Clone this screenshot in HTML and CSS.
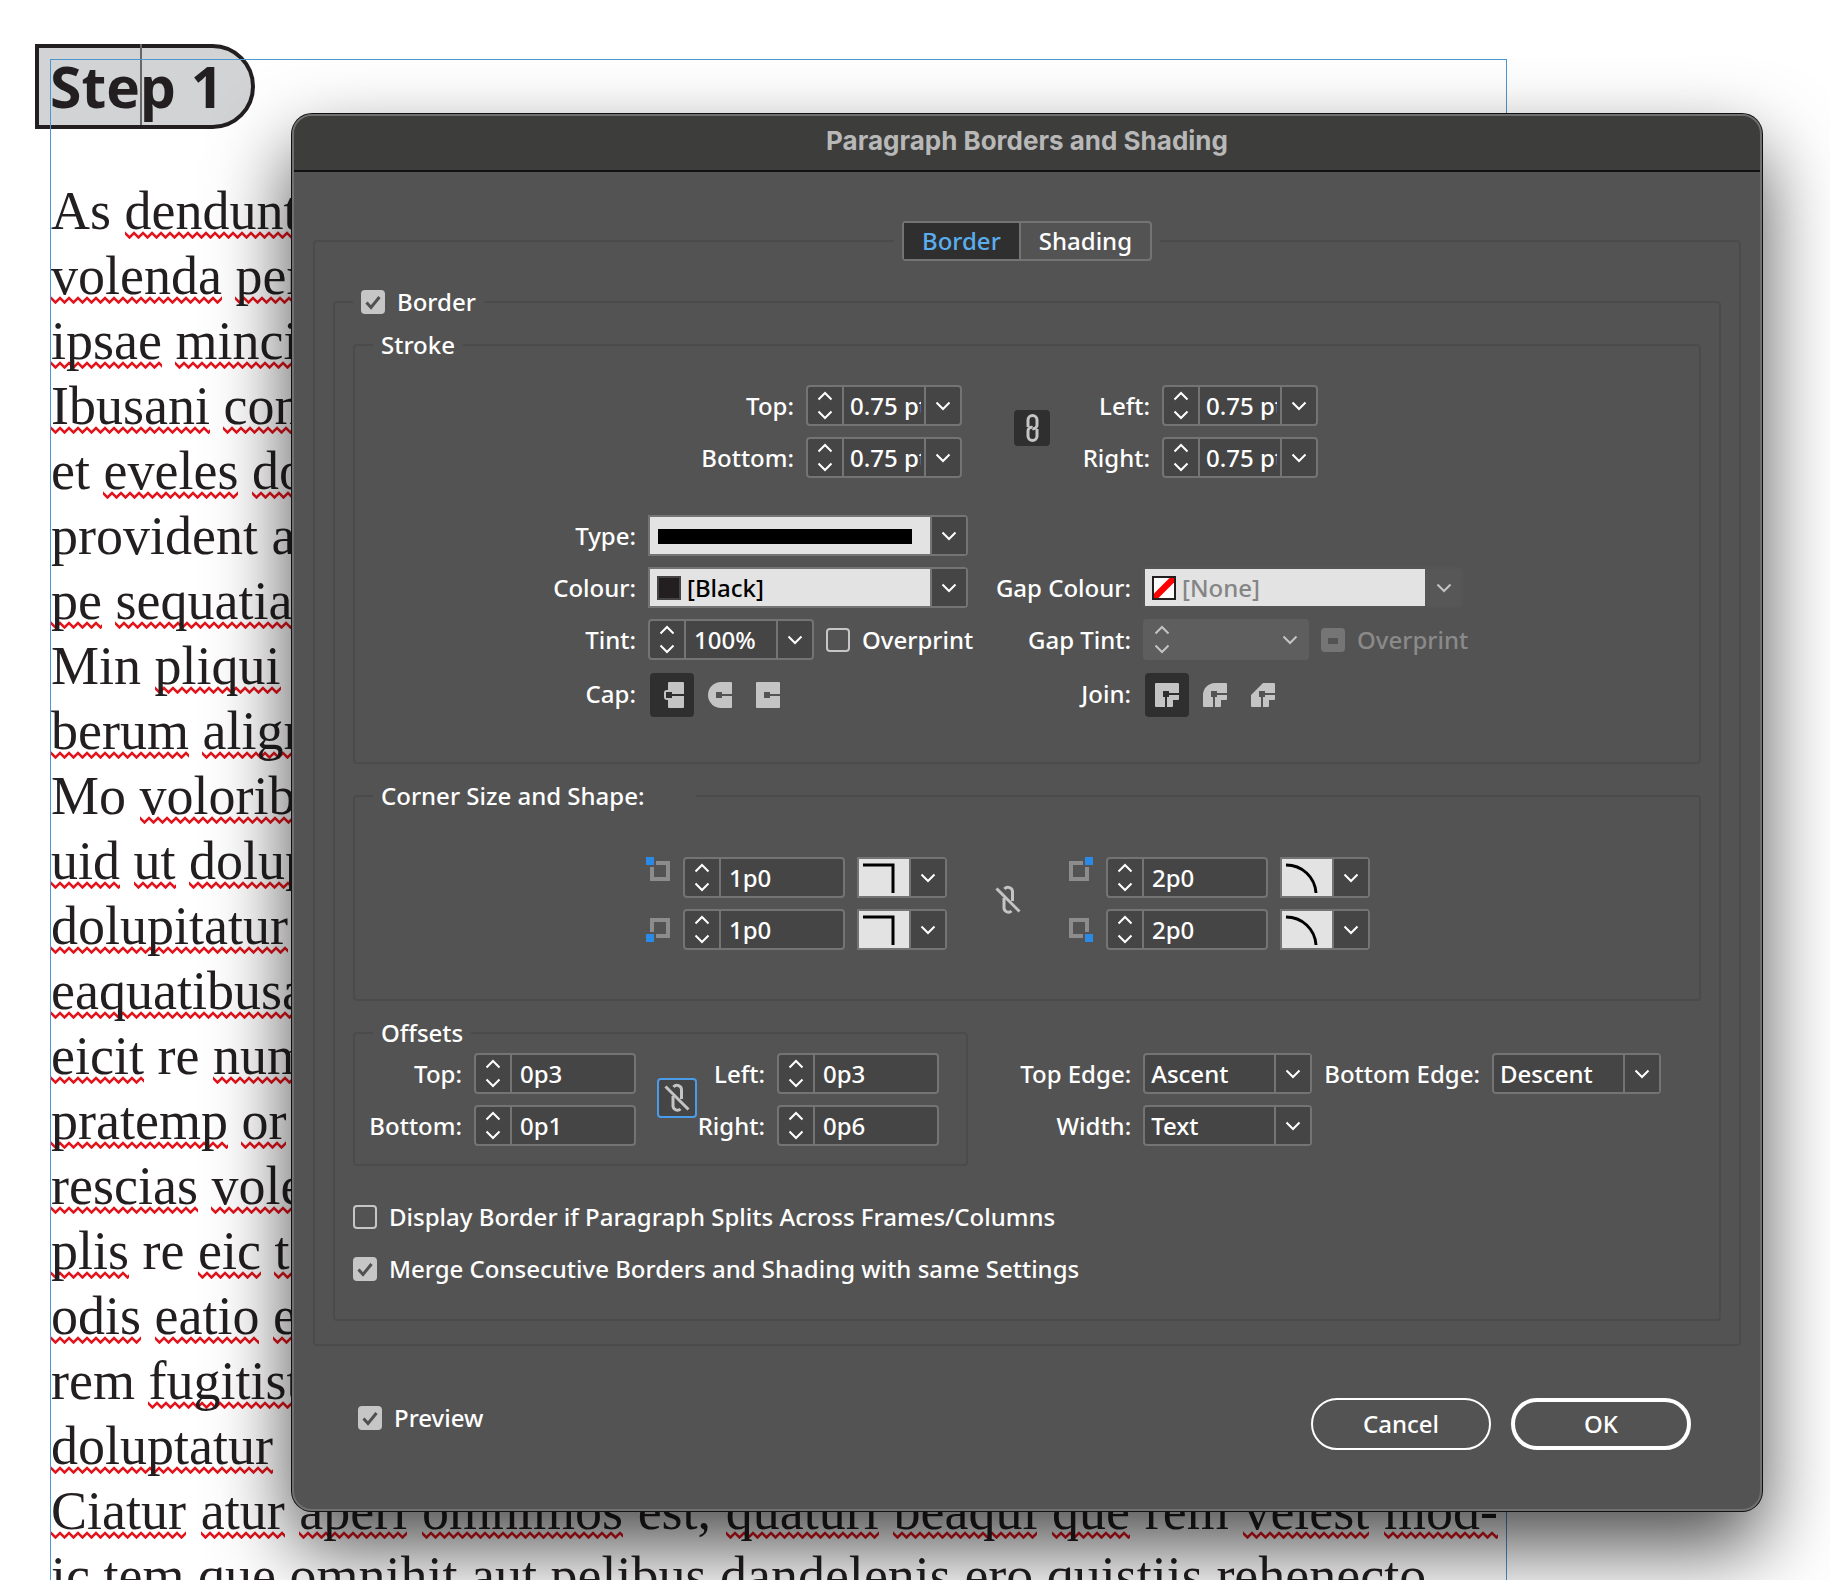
FILE: index.html
```
<!DOCTYPE html>
<html lang="en">
<head>
  <meta charset="utf-8">
  <title>Paragraph Borders and Shading</title>
  <link rel="stylesheet" href="styles.css">
</head>

<body>
  <!-- shared icons -->
  <svg class="sprite" aria-hidden="true">
    <symbol id="down" viewBox="0 0 16 10"><path d="M1.5 1.5L8 8l6.5-6.5" /></symbol>
    <symbol id="up" viewBox="0 0 16 10"><path d="M1.5 8.5L8 2l6.5 6.5" /></symbol>
    <symbol id="link" viewBox="0 0 24 30">
      <path d="M8 14V7a4.500 4.500 0 0 1 9 0v5a3.500 3.500 0 0 1-4.500 3.500" />
      <path d="M17 16v7a4.500 4.500 0 0 1-9 0v-5a3.500 3.500 0 0 1 4.500-3.500" />
    </symbol>
    <symbol id="unlink" viewBox="0 0 26 30">
      <path d="M9.500 4a4.500 4.500 0 0 1 8 3V16" />
      <path d="M9 13V23a4.500 4.500 0 0 0 7.500 3" />
      <path d="M1.500 3.500l23 23" />
    </symbol>
    <symbol id="square" viewBox="0 0 40 37"><path d="M4 6H34V34" /></symbol>
    <symbol id="round" viewBox="0 0 40 37"><path d="M4 6C20 6 33 18 34 34" /></symbol>
  </svg>

  <div class="page">
    <h1 class="step">Ste<span class="caret"></span>p 1</h1>
    <div class="story">
      <p>As <u>dendunt</u></p>
      <p><u>volenda</u> <u>per</u></p>
      <p><u>ipsae</u> <u>minci</u></p>
      <p><u>Ibusani</u> <u>con</u></p>
      <p>et <u>eveles</u> <u>dol</u></p>
      <p>provident a</p>
      <p><u>pe</u> <u>sequatia</u></p>
      <p>Min <u>pliqui</u></p>
      <p><u>berum</u> <u>align</u></p>
      <p>Mo <u>volorib</u></p>
      <p><u>uid</u> <u>ut</u> <u>dolup</u></p>
      <p><u>dolupitatur</u></p>
      <p><u>eaquatibusa</u></p>
      <p><u>eicit</u> re <u>num</u></p>
      <p><u>pratemp</u> <u>or</u></p>
      <p><u>rescias</u> <u>vole</u></p>
      <p><u>plis</u> re <u>eic</u> <u>to</u></p>
      <p><u>odis</u> <u>eatio</u> <u>e</u></p>
      <p>rem <u>fugitist</u></p>
      <p><u>doluptatur</u></p>
      <p class="full"><u>Ciatur</u> <u>atur</u> <u>aperi</u> <u>omnimos</u> est, <u>quaturi</u> <u>beaqui</u> <u>que</u> rem <u>velest</u> <u>mod-</u></p>
      <p><u>ic</u> tem <u>que</u> <u>omnihit</u> aut <u>pelibus</u> <u>dandelenis</u> ero <u>quistiis</u> <u>rehenecto</u></p>
    </div>
  </div>

  <form class="dialog" role="dialog" aria-labelledby="dialog-title">
    <h2 id="dialog-title" class="title">Paragraph Borders and Shading</h2>

    <fieldset class="group panel">
      <legend class="tabs">
        <span class="tab-bar">
          <button type="button" class="tab active">Border</button><button type="button" class="tab">Shading</button>
        </span>
      </legend>

      <fieldset class="group border-group">
        <legend><label class="check"><input type="checkbox" checked>Border</label></legend>

        <fieldset class="group stroke">
          <legend>Stroke</legend>

          <div class="weights">
            <label for="w-top">Top:</label>
            <div class="field">
              <span class="arrows"><button type="button" aria-label="Up"><svg><use href="#up" /></svg></button><button type="button" aria-label="Down"><svg><use href="#down" /></svg></button></span>
              <input id="w-top" type="text" value="0.75 pt">
              <button type="button" class="drop" aria-label="Open"><svg><use href="#down" /></svg></button>
            </div>
            <button type="button" class="link on" aria-label="Link"><svg><use href="#link" /></svg></button>
            <label for="w-left">Left:</label>
            <div class="field">
              <span class="arrows"><button type="button" aria-label="Up"><svg><use href="#up" /></svg></button><button type="button" aria-label="Down"><svg><use href="#down" /></svg></button></span>
              <input id="w-left" type="text" value="0.75 pt">
              <button type="button" class="drop" aria-label="Open"><svg><use href="#down" /></svg></button>
            </div>

            <label for="w-bottom">Bottom:</label>
            <div class="field">
              <span class="arrows"><button type="button" aria-label="Up"><svg><use href="#up" /></svg></button><button type="button" aria-label="Down"><svg><use href="#down" /></svg></button></span>
              <input id="w-bottom" type="text" value="0.75 pt">
              <button type="button" class="drop" aria-label="Open"><svg><use href="#down" /></svg></button>
            </div>
            <label for="w-right">Right:</label>
            <div class="field">
              <span class="arrows"><button type="button" aria-label="Up"><svg><use href="#up" /></svg></button><button type="button" aria-label="Down"><svg><use href="#down" /></svg></button></span>
              <input id="w-right" type="text" value="0.75 pt">
              <button type="button" class="drop" aria-label="Open"><svg><use href="#down" /></svg></button>
            </div>
          </div>

          <div class="style">
            <label for="type">Type:</label>
            <div class="field light">
              <select id="type"><option></option></select>
              <span class="line-sample"></span>
              <span class="drop"><svg><use href="#down" /></svg></span>
            </div>
            <span></span>
            <span></span>

            <label for="colour">Colour:</label>
            <div class="field light">
              <select id="colour"><option>[Black]</option></select>
              <span class="swatch black"></span>
              <span class="drop"><svg><use href="#down" /></svg></span>
            </div>
            <label for="gap-colour">Gap Colour:</label>
            <div class="field light disabled">
              <select id="gap-colour" disabled><option>[None]</option></select>
              <svg class="swatch none" viewBox="0 0 24 24"><rect x="1" y="1" width="22" height="22" /><path d="M2 22V17.500L17.500 2H22V6.500L6.500 22Z" /></svg>
              <span class="drop"><svg><use href="#down" /></svg></span>
            </div>

            <label for="tint">Tint:</label>
            <div class="row">
              <div class="field tint">
                <span class="arrows"><button type="button" aria-label="Up"><svg><use href="#up" /></svg></button><button type="button" aria-label="Down"><svg><use href="#down" /></svg></button></span>
                <input id="tint" type="text" value="100%">
                <button type="button" class="drop" aria-label="Open"><svg><use href="#down" /></svg></button>
              </div>
              <label class="check"><input type="checkbox">Overprint</label>
            </div>
            <label for="gap-tint">Gap Tint:</label>
            <div class="row">
              <div class="field tint disabled">
                <span class="arrows"><button type="button" aria-label="Up" disabled><svg><use href="#up" /></svg></button><button type="button" aria-label="Down" disabled><svg><use href="#down" /></svg></button></span>
                <input id="gap-tint" type="text" disabled>
                <button type="button" class="drop" aria-label="Open" disabled><svg><use href="#down" /></svg></button>
              </div>
              <label class="check off"><input type="checkbox" class="mixed" disabled>Overprint</label>
            </div>

            <span class="label">Cap:</span>
            <div class="icons">
              <button type="button" class="on" aria-label="Butt cap">
                <svg viewBox="0 0 24 26"><path d="M8 9H7a2 2 0 0 0-2 2v4a2 2 0 0 0 2 2h1" class="outline" /><path d="M8 1a1 1 0 0 1 1-1H23a1 1 0 0 1 1 1V25a1 1 0 0 1-1 1H9a1 1 0 0 1-1-1Z" /><path d="M6 10h6v2h12v2H12v2H6Z" class="cut" /></svg>
              </button>
              <button type="button" aria-label="Round cap">
                <svg viewBox="0 0 24 26"><path d="M13 0H23a1 1 0 0 1 1 1V25a1 1 0 0 1-1 1H13A13 13 0 0 1 13 0Z" /><path d="M8 10h6v2h10v2H14v2H8Z" class="cut" /></svg>
              </button>
              <button type="button" aria-label="Projecting cap">
                <svg viewBox="0 0 24 26"><rect width="24" height="26" rx="1" /><path d="M8 10h6v2h10v2H14v2H8Z" class="cut" /></svg>
              </button>
            </div>
            <span class="label">Join:</span>
            <div class="icons">
              <button type="button" class="on" aria-label="Miter join">
                <svg viewBox="0 0 24 26"><path d="M1 1H23a1 1 0 0 1 1 1V17a1 1 0 0 1-1 1H18V24a1 1 0 0 1-1 1H1a1 1 0 0 1-1-1V2a1 1 0 0 1 1-1Z" /><path d="M8 9h6v2h10v2H14v2H12v10H10V15H8Z" class="cut" /></svg>
              </button>
              <button type="button" aria-label="Round join">
                <svg viewBox="0 0 24 26"><path d="M12 1H23a1 1 0 0 1 1 1V17a1 1 0 0 1-1 1H18V24a1 1 0 0 1-1 1H1a1 1 0 0 1-1-1V13A12 12 0 0 1 12 1Z" /><path d="M8 9h6v2h10v2H14v2H12v10H10V15H8Z" class="cut" /></svg>
              </button>
              <button type="button" aria-label="Bevel join">
                <svg viewBox="0 0 24 26"><path d="M12 1H23a1 1 0 0 1 1 1V17a1 1 0 0 1-1 1H18V24a1 1 0 0 1-1 1H1a1 1 0 0 1-1-1V13Z" /><path d="M8 9h6v2h10v2H14v2H12v10H10V15H8Z" class="cut" /></svg>
              </button>
            </div>
          </div>
        </fieldset>

        <fieldset class="group corners">
          <legend class="wide">Corner Size and Shape:</legend>
          <div class="corner-grid">
            <svg class="corner top" viewBox="0 0 24 24"><path d="M10 6H22V22H6V10" /><rect width="8" height="8" /></svg>
            <div class="field">
              <span class="arrows"><button type="button" aria-label="Up"><svg><use href="#up" /></svg></button><button type="button" aria-label="Down"><svg><use href="#down" /></svg></button></span>
              <input type="text" value="1p0" aria-label="Top left size">
            </div>
            <div class="field light">
              <select aria-label="Top left shape"><option></option></select>
              <svg class="shape"><use href="#square" /></svg>
              <span class="drop"><svg><use href="#down" /></svg></span>
            </div>
            <button type="button" class="link" aria-label="Link corners"><svg><use href="#unlink" /></svg></button>
            <svg class="corner top" viewBox="0 0 24 24"><path d="M14 6H2V22H18V10" /><rect x="16" width="8" height="8" /></svg>
            <div class="field">
              <span class="arrows"><button type="button" aria-label="Up"><svg><use href="#up" /></svg></button><button type="button" aria-label="Down"><svg><use href="#down" /></svg></button></span>
              <input type="text" value="2p0" aria-label="Top right size">
            </div>
            <div class="field light">
              <select aria-label="Top right shape"><option></option></select>
              <svg class="shape"><use href="#round" /></svg>
              <span class="drop"><svg><use href="#down" /></svg></span>
            </div>

            <svg class="corner" viewBox="0 0 24 24"><path d="M10 18H22V2H6V14" /><rect y="16" width="8" height="8" /></svg>
            <div class="field">
              <span class="arrows"><button type="button" aria-label="Up"><svg><use href="#up" /></svg></button><button type="button" aria-label="Down"><svg><use href="#down" /></svg></button></span>
              <input type="text" value="1p0" aria-label="Bottom left size">
            </div>
            <div class="field light">
              <select aria-label="Bottom left shape"><option></option></select>
              <svg class="shape"><use href="#square" /></svg>
              <span class="drop"><svg><use href="#down" /></svg></span>
            </div>
            <svg class="corner" viewBox="0 0 24 24"><path d="M14 18H2V2H18V14" /><rect x="16" y="16" width="8" height="8" /></svg>
            <div class="field">
              <span class="arrows"><button type="button" aria-label="Up"><svg><use href="#up" /></svg></button><button type="button" aria-label="Down"><svg><use href="#down" /></svg></button></span>
              <input type="text" value="2p0" aria-label="Bottom right size">
            </div>
            <div class="field light">
              <select aria-label="Bottom right shape"><option></option></select>
              <svg class="shape"><use href="#round" /></svg>
              <span class="drop"><svg><use href="#down" /></svg></span>
            </div>
          </div>
        </fieldset>

        <div class="bottom">
          <fieldset class="group offsets">
            <legend>Offsets</legend>
            <div class="offset-grid">
              <label for="o-top">Top:</label>
              <div class="field">
                <span class="arrows"><button type="button" aria-label="Up"><svg><use href="#up" /></svg></button><button type="button" aria-label="Down"><svg><use href="#down" /></svg></button></span>
                <input id="o-top" type="text" value="0p3">
              </div>
              <button type="button" class="link focus" aria-label="Link offsets"><svg><use href="#unlink" /></svg></button>
              <label for="o-left">Left:</label>
              <div class="field">
                <span class="arrows"><button type="button" aria-label="Up"><svg><use href="#up" /></svg></button><button type="button" aria-label="Down"><svg><use href="#down" /></svg></button></span>
                <input id="o-left" type="text" value="0p3">
              </div>
              <label for="o-bottom">Bottom:</label>
              <div class="field">
                <span class="arrows"><button type="button" aria-label="Up"><svg><use href="#up" /></svg></button><button type="button" aria-label="Down"><svg><use href="#down" /></svg></button></span>
                <input id="o-bottom" type="text" value="0p1">
              </div>
              <label for="o-right">Right:</label>
              <div class="field">
                <span class="arrows"><button type="button" aria-label="Up"><svg><use href="#up" /></svg></button><button type="button" aria-label="Down"><svg><use href="#down" /></svg></button></span>
                <input id="o-right" type="text" value="0p6">
              </div>
            </div>
          </fieldset>

          <div class="edges">
            <label for="top-edge">Top Edge:</label>
            <div class="field">
              <select id="top-edge"><option>Ascent</option></select>
              <span class="drop"><svg><use href="#down" /></svg></span>
            </div>
            <label for="bottom-edge">Bottom Edge:</label>
            <div class="field">
              <select id="bottom-edge"><option>Descent</option></select>
              <span class="drop"><svg><use href="#down" /></svg></span>
            </div>
            <label for="width">Width:</label>
            <div class="field">
              <select id="width"><option>Text</option></select>
              <span class="drop"><svg><use href="#down" /></svg></span>
            </div>
          </div>
        </div>

        <div class="options">
          <label class="check"><input type="checkbox">Display Border if Paragraph Splits Across Frames/Columns</label>
          <label class="check"><input type="checkbox" checked>Merge Consecutive Borders and Shading with same Settings</label>
        </div>
      </fieldset>
    </fieldset>

    <div class="footer">
      <label class="check"><input type="checkbox" checked>Preview</label>
      <div class="buttons">
        <button type="button" class="pill">Cancel</button>
        <button type="button" class="pill default">OK</button>
      </div>
    </div>
  </form>
</body>
</html>
```
FILE: styles.css
```
* {
  box-sizing: border-box;
}

body {
  position: relative;
  height: 100vh;
  margin: 0;
  overflow: hidden;
  background-color: #fff;
}

.sprite {
  display: none;
}

/* document behind the dialog */

.page {
  margin: 59px 323px 0 50px;
  border: 1px solid #4a97d2;
  border-bottom: 0;
  color: #231f20;
}

.step {
  position: relative;
  z-index: -1;
  width: 220px;
  height: 85px;
  margin: -16px 0 0 -16px;
  padding-left: 11px;
  border: 4px solid #231f20;
  border-radius: 0 43px 43px 0;
  background-color: #d1d3d4;
  font: bold 57px/76px "Open Sans", sans-serif;
  white-space: nowrap;
}

.caret {
  position: absolute;
  top: -4px;
  height: 81px;
  border-left: 2px solid #666;
}

.story {
  padding-top: 50px;
  font: 54px/65px "Liberation Serif", serif;
}

.story p {
  height: 65px;
  margin: 0;
  white-space: nowrap;
}

.story .full {
  padding-right: 8px;
  white-space: normal;
  text-align-last: justify;
}

.story u {
  text-decoration: none;
  background: url("data:image/svg+xml,%3Csvg xmlns='http://www.w3.org/2000/svg' width='9' height='8'%3E%3Cpath d='M-1 1L4.500 6.500L10 1' fill='none' stroke='%23e3131b' stroke-width='2.500'/%3E%3C/svg%3E") repeat-x 0 50px;
}

/* dialog */

.dialog {
  position: absolute;
  top: 114px;
  left: 292px;
  right: 68px;
  border: 2px solid #707070;
  border-radius: 20px;
  background-color: #535353;
  box-shadow: 0 0 0 1px #111, 0 36px 80px rgba(0, 0, 0, 0.7);
  color: #fff;
  font: 500 24px/28px "Noto Sans", sans-serif;
}

.title {
  height: 56px;
  margin: 0 0 49px;
  border-bottom: 2px solid #111;
  border-radius: 18px 18px 0 0;
  background-color: #3d3d3b;
  color: #b8b8b8;
  font: bold 26px/50px Inter, sans-serif;
  text-align: center;
}

button,
input,
select {
  margin: 0;
  padding: 0;
  border: 0;
  background: none;
  color: inherit;
  font: inherit;
}

.group {
  min-width: 0;
  margin: 0;
  padding: 0 18px;
  border: 2px solid #4b4b4b;
  border-radius: 4px;
}

legend {
  padding: 0 8px;
}

.wide {
  padding-right: 52px;
}

.panel {
  margin: 0 19px;
  padding-bottom: 23px;
}

.tabs {
  margin: 0 auto;
}

.tab-bar {
  display: flex;
  border: 2px solid #747474;
  border-radius: 4px;
}

.tab {
  height: 36px;
  padding: 0 18px;
}

.tab.active {
  border-right: 2px solid #747474;
  background-color: #2f2f2f;
  color: #5aaeee;
}

.border-group {
  margin-top: 27px;
  padding-bottom: 36px;
}

.stroke {
  margin-top: 15px;
  padding-top: 26px;
  padding-bottom: 45px;
}

.corners {
  margin-top: 18px;
  padding-top: 47px;
  padding-bottom: 49px;
}

.weights,
.style,
.corner-grid,
.offset-grid,
.edges {
  display: grid;
  gap: 11px 12px;
  align-items: center;
  white-space: nowrap;
}

.weights > label,
.style > label,
.label,
.offset-grid > label,
.edges > label {
  justify-self: end;
}

.weights {
  grid-template-columns: 421px 156px 76px 88px 156px;
  margin-bottom: 37px;
}

.style {
  grid-template-columns: 263px 320px 151px 320px;
}

/* text fields, steppers and drop-downs */

.field {
  position: relative;
  display: flex;
  height: 41px;
  border: 2px solid #747474;
  border-radius: 4px;
  background-color: #454545;
}

.field input {
  flex: 1;
  min-width: 0;
  padding-left: 8px;
}

.weights input {
  padding: 0 3px 0 6px;
}

.field select {
  width: 100%;
  padding-left: 6px;
  appearance: none;
}

.field svg,
.link svg {
  fill: none;
  stroke: #fff;
  stroke-width: 2;
}

.arrows {
  display: flex;
  flex-direction: column;
  width: 36px;
  border-right: 2px solid #747474;
}

.arrows button,
.drop {
  display: flex;
  flex: 1;
  align-items: center;
  justify-content: center;
}

.arrows svg,
.drop svg {
  width: 16px;
  height: 10px;
}

.field .drop {
  flex: none;
  width: 36px;
  border-left: 2px solid #747474;
}

.field span.drop {
  position: absolute;
  top: 0;
  right: 0;
  bottom: 0;
  background-color: #454545;
  pointer-events: none;
}

.light {
  border-radius: 0 4px 4px 0;
  background-color: #e3e3e3;
  color: #000;
}

.light select {
  padding-left: 37px;
}

.line-sample {
  position: absolute;
  top: 12px;
  left: 8px;
  right: 54px;
  height: 15px;
  background-color: #000;
}

.swatch {
  position: absolute;
  top: 7px;
  left: 7px;
  width: 24px;
  height: 24px;
}

.swatch.black {
  border: 2px solid #444;
  background-color: #231f20;
}

.field .none rect {
  fill: #fff;
  stroke: #231f20;
}

.field .none path {
  fill: #f00;
  stroke: none;
}

.tint {
  width: 166px;
}

.disabled,
.disabled .arrows,
.field.disabled .drop {
  border-color: transparent;
}

.disabled.tint {
  background-color: #5e5e5e;
}

.disabled.light {
  border-color: #555;
  color: #858585;
}

.disabled select {
  opacity: 1;
}

.field.disabled span.drop {
  border-color: #575757;
  background-color: #575757;
}

.disabled .arrows svg,
.disabled .drop svg {
  stroke: #c4c4c4;
}

.row {
  display: flex;
  gap: 12px;
  align-items: center;
}

/* tick boxes */

.check {
  display: flex;
  gap: 12px;
  align-items: center;
  white-space: nowrap;
}

.check input {
  flex: none;
  width: 24px;
  height: 24px;
  border: 2px solid #c6c6c6;
  border-radius: 4px;
  appearance: none;
}

.check input:checked {
  border: 0;
  background: #c6c6c6 url("data:image/svg+xml,%3Csvg xmlns='http://www.w3.org/2000/svg' width='24' height='24'%3E%3Cpath d='M5.500 12.500L10 17.500L18.500 7' fill='none' stroke='%23505050' stroke-width='3'/%3E%3C/svg%3E");
}

.check input.mixed {
  border: 0;
  background: #757575 url("data:image/svg+xml,%3Csvg xmlns='http://www.w3.org/2000/svg' width='24' height='24'%3E%3Cpath d='M7 10h10v6H7z' fill='%23535353'/%3E%3C/svg%3E");
}

.off {
  color: #8a8a8a;
}

/* icon buttons */

.icons {
  display: flex;
  gap: 4px;
  padding: 2px 0 0 2px;
}

.icons button {
  --cut: #535353;
  display: flex;
  align-items: center;
  justify-content: center;
  width: 44px;
  height: 44px;
  border-radius: 4px;
}

.icons button.on {
  --cut: #2f2f2f;
  background-color: #2f2f2f;
}

.icons svg {
  width: 24px;
  height: 26px;
  fill: #c4c4c4;
}

.icons .cut {
  fill: var(--cut);
}

.icons .outline {
  fill: none;
  stroke: #c4c4c4;
  stroke-width: 2;
}

.link {
  display: flex;
  grid-row: span 2;
  align-items: center;
  align-self: start;
  justify-content: center;
  justify-self: end;
  width: 36px;
  height: 36px;
  margin-top: 25px;
  border-radius: 4px;
}

.link svg {
  width: 26px;
  height: 30px;
  stroke: #c4c4c4;
  stroke-width: 3;
}

.link.on {
  background-color: #2f2f2f;
}

.link.focus {
  width: 40px;
  height: 40px;
  border: 2px solid #4b9ce8;
  background-color: #454545;
}

/* corners */

.corner-grid {
  grid-template-columns: 25px 162px 90px 98px 25px 162px 90px;
  padding-left: 273px;
}

.corner-grid .link {
  justify-self: center;
}

.corner {
  width: 24px;
  height: 24px;
}

.corner.top {
  align-self: start;
}

.corner path {
  fill: none;
  stroke: #8c8c8c;
  stroke-width: 4;
}

.corner rect {
  fill: #2b8ae6;
}

.field .shape {
  position: absolute;
  top: 0;
  left: 0;
  width: 40px;
  height: 37px;
  stroke: #000;
  stroke-width: 3;
  pointer-events: none;
}

/* offsets and edges */

.bottom {
  display: flex;
  flex-wrap: wrap;
  justify-content: space-between;
  margin-top: 18px;
}

.offsets {
  width: 615px;
  padding-top: 6px;
  padding-bottom: 18px;
}

.offset-grid {
  grid-template-columns: 89px 162px 49px 56px 162px;
}

.edges {
  grid-template-columns: auto 169px auto 169px;
  align-content: start;
  margin-right: 40px;
  padding-top: 34px;
}

.options {
  display: flex;
  flex-direction: column;
  gap: 24px;
  margin-top: 37px;
}

.footer {
  display: flex;
  align-items: flex-start;
  justify-content: space-between;
  padding: 52px 69px 59px 64px;
}

.footer .check {
  padding-top: 6px;
}

.buttons {
  display: flex;
  gap: 20px;
}

.pill {
  width: 180px;
  height: 52px;
  border: 2px solid #fff;
  border-radius: 26px;
}

.pill.default {
  border-width: 4px;
}
```
